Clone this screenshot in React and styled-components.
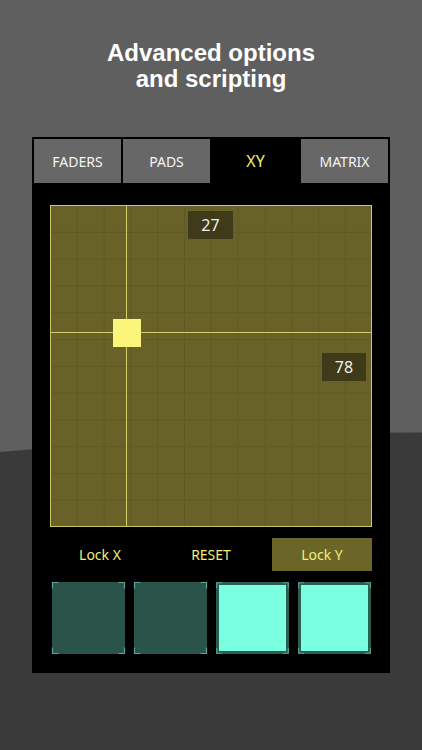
import React from 'react';
import styled, { createGlobalStyle } from 'styled-components';

const GlobalStyle = createGlobalStyle`
	html, body {
		margin: 0;
		padding: 0;
		background: #5f5f5f;
	}
`;

const Page = styled.div`
	width: 422px;
	height: 750px;
	overflow: hidden;
	display: flex;
	flex-direction: column;
	align-items: center;
	background: radial-gradient(circle 4741px at 430px 5173px, #3a3a3a 4740px, #5f5f5f 4741px);
	font-family: 'Noto Sans', 'Open Sans', sans-serif;
`;

const Title = styled.h1`
	margin: 40px 0 0;
	font-family: 'Liberation Sans', Arial, sans-serif;
	font-weight: bold;
	font-size: 24px;
	line-height: 26px;
	color: #fff;
	text-align: center;
`;

const Panel = styled.div`
	margin-top: 45px;
	width: 358px;
	height: 536px;
	box-sizing: border-box;
	background: #000;
	padding: 2px 2px 0;
	display: flex;
	flex-direction: column;
`;

const Tabs = styled.div`
	display: grid;
	grid-template-columns: repeat(4, 1fr);
	gap: 2px;
	height: 44px;
`;

const Tab = styled.div`
	display: flex;
	align-items: center;
	justify-content: center;
	background: ${p => (p.$active ? '#000' : '#676767')};
	color: ${p => (p.$active ? '#f2ec6c' : '#f4f4f4')};
	font-size: ${p => (p.$active ? '16px' : '14px')};
`;

const Body = styled.div`
	padding: 22px 16px 0;
	display: flex;
	flex-direction: column;
	gap: 11px;
`;

const XYPad = styled.div`
	position: relative;
	width: 322px;
	height: 322px;
	box-sizing: border-box;
	border: 1px solid #cfc66a;
	background-color: #686228;
	background-image:
		linear-gradient(to right, #5e5925 1px, transparent 1px),
		linear-gradient(to bottom, #5e5925 1px, transparent 1px);
	background-size: 26.8px 26.8px;
	background-position: -1px -1px;
	overflow: hidden;
`;

const CrossV = styled.div`
	position: absolute;
	top: 0;
	bottom: 0;
	width: 1px;
	background: #d6cd6c;
`;

const CrossH = styled.div`
	position: absolute;
	left: 0;
	right: 0;
	height: 1px;
	background: #d6cd6c;
`;

const Knob = styled.div`
	position: absolute;
	width: 28px;
	height: 28px;
	transform: translate(-50%, -50%);
	background: #fbf67a;
`;

const ValueTag = styled.div`
	position: absolute;
	width: 45px;
	height: 28px;
	display: flex;
	align-items: center;
	justify-content: center;
	background: #3e3a1a;
	color: #f0f0e6;
	font-size: 16px;
`;

const Controls = styled.div`
	display: grid;
	grid-template-columns: repeat(3, 1fr);
	gap: 11px;
	height: 33px;
`;

const Toggle = styled.div`
	display: flex;
	align-items: center;
	justify-content: center;
	background: ${p => (p.$on ? '#6b6528' : 'transparent')};
	color: #f3ed78;
	font-size: 14px;
`;

const Pads = styled.div`
	display: grid;
	grid-template-columns: repeat(4, 73px);
	justify-content: center;
	gap: 9px;
`;

const Pad = styled.div`
	position: relative;
	height: 72px;
	box-sizing: border-box;
	background: ${p => (p.$lit ? '#7affe0' : '#2a544a')};
	border: ${p => (p.$lit ? '3px solid #2c5d51' : 'none')};
`;

const CornerSvg = styled.svg`
	position: absolute;
	left: 0;
	top: 0;
	width: 100%;
	height: 100%;
	overflow: visible;
`;

const Corners = ({ lit }) => {
	const o = lit ? -3 : 0;
	const s = lit ? 79 : 73;
	const l = 6;
	const a = o + 0.5;
	const b = o + s - 0.5;
	return (
		<CornerSvg viewBox={`0 0 73 72`} preserveAspectRatio="none">
			<g fill="none" stroke="#5aa493" strokeWidth="1.2">
				<polyline points={`${a},${a + l} ${a},${a} ${a + l},${a}`} />
				<polyline points={`${b - l},${a} ${b},${a} ${b},${a + l}`} />
				<polyline points={`${a},${b - 1 - l} ${a},${b - 1} ${a + l},${b - 1}`} />
				<polyline points={`${b - l},${b - 1} ${b},${b - 1} ${b},${b - 1 - l}`} />
			</g>
		</CornerSvg>
	);
};

const pads = [false, false, true, true];

const App = () => {
	const x = 76;
	const y = 127;
	return (
		<>
			<GlobalStyle />
			<Page>
				<Title>
					Advanced options
					<br />
					and scripting
				</Title>
				<Panel>
					<Tabs>
						<Tab>FADERS</Tab>
						<Tab>PADS</Tab>
						<Tab $active>XY</Tab>
						<Tab>MATRIX</Tab>
					</Tabs>
					<Body>
						<XYPad>
							<CrossV style={{ left: x - 1 }} />
							<CrossH style={{ top: y - 1 }} />
							<Knob style={{ left: x, top: y }} />
							<ValueTag style={{ left: 137, top: 5 }}>27</ValueTag>
							<ValueTag style={{ left: 271, top: 147, width: 44 }}>78</ValueTag>
						</XYPad>
						<Controls>
							<Toggle>Lock X</Toggle>
							<Toggle>RESET</Toggle>
							<Toggle $on>Lock Y</Toggle>
						</Controls>
						<Pads>
							{pads.map((lit, i) => (
								<Pad key={i} $lit={lit}>
									<Corners lit={lit} />
								</Pad>
							))}
						</Pads>
					</Body>
				</Panel>
			</Page>
		</>
	);
};

export default App;
